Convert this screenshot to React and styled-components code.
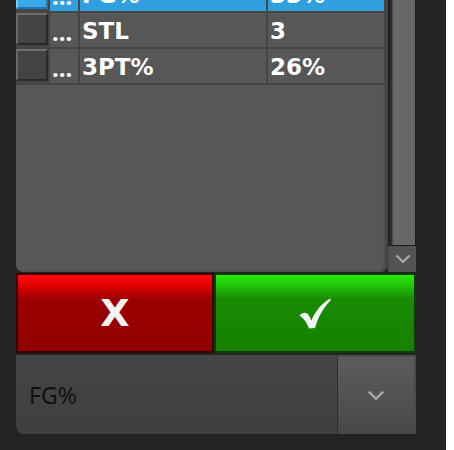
import React, { useEffect, useRef } from "react";
import styled, { createGlobalStyle } from "styled-components";

const GlobalStyle = createGlobalStyle`
  body {
    margin: 0;
    background: #ffffff;
    font-family: "Noto Sans", "Open Sans", sans-serif;
  }
`;

const rows = [
  { name: "FG%", value: "33%", selected: true },
  { name: "STL", value: "3" },
  { name: "3PT%", value: "26%" },
];

const Chevron = ({ size = 16, color = "#a8a8a8" }) => (
  <svg width={size} height={size / 2 + 2} viewBox="0 0 16 10">
    <path d="M1.5 1.5 L8 8 L14.5 1.5" fill="none" stroke={color} strokeWidth="2.2" />
  </svg>
);

const CheckMark = () => (
  <svg width="32" height="31" viewBox="0 0 32 31">
    <path
      d="M0.5 17.5 C4 13.5 8.5 14 10.5 18.5 L12.3 22.5 C16.5 13 22.5 5.5 31 0.5 L32 2 C25 9 19.5 18 16 30 L10 30.5 C8 25 5 20.5 0.5 17.5 Z"
      fill="#f4f4f4"
    />
  </svg>
);

const App = () => {
  const listRef = useRef(null);

  useEffect(() => {
    // list is scrolled a bit, first row cut at the top
    if (listRef.current) listRef.current.scrollTop = 23;
  }, []);

  return (
    <>
      <GlobalStyle />
      <Page>
        <Column>
          <ListPanel>
            <List ref={listRef}>
              {rows.map((r) => (
                <Row key={r.name} $selected={r.selected}>
                  <Check $selected={r.selected} />
                  <Dots $selected={r.selected}>...</Dots>
                  <Cell $selected={r.selected}>{r.name}</Cell>
                  <Cell $selected={r.selected}>{r.value}</Cell>
                </Row>
              ))}
              <Filler />
            </List>
            <Scrollbar>
              <Track />
              <ScrollButton>
                <Chevron size={16} />
              </ScrollButton>
            </Scrollbar>
          </ListPanel>
          <Buttons>
            <ActionButton $kind="cancel">X</ActionButton>
            <ActionButton $kind="ok">
              <CheckMark />
            </ActionButton>
          </Buttons>
          <Dropdown>
            <DropdownLabel>FG%</DropdownLabel>
            <DropdownButton>
              <Chevron size={18} />
            </DropdownButton>
          </Dropdown>
        </Column>
      </Page>
    </>
  );
};

export default App;

const Page = styled.div`
  width: 446px;
  height: 450px;
  background: #232323;
  padding-left: 16px;
  box-sizing: border-box;
`;

const Column = styled.div`
  width: 400px;
  display: flex;
  flex-direction: column;
`;

const ListPanel = styled.div`
  height: 272px;
  display: flex;
`;

const List = styled.div`
  flex: 1;
  background: #575757;
  border-radius: 0 0 7px 7px;
  overflow: hidden;
  box-shadow: inset -3px 0 3px rgba(0, 0, 0, 0.25);
`;

const Filler = styled.div`
  height: 400px;
`;

const Row = styled.div`
  display: grid;
  grid-template-columns: 32px 28px 186px 116px;
  column-gap: 2px;
  height: 34px;
  padding-right: 3px;
  background: #454545;
  border-bottom: 2px solid #454545;
`;

const Check = styled.div`
  height: 32px;
  box-sizing: border-box;
  background: ${(p) => (p.$selected ? "#39a9ea" : "#434343")};
  border-top: 2px solid ${(p) => (p.$selected ? "#7cc8f2" : "#6e6e6e")};
  border-left: 2px solid ${(p) => (p.$selected ? "#7cc8f2" : "#6a6a6a")};
  border-right: 2px solid ${(p) => (p.$selected ? "#1f78b0" : "#2a2a2a")};
  border-bottom: 2px solid ${(p) => (p.$selected ? "#1f78b0" : "#2a2a2a")};
`;

const Cell = styled.div`
  background: ${(p) => (p.$selected ? "#2f9fe0" : "#575757")};
  color: #ffffff;
  font-family: "DejaVu Sans", "Noto Sans", sans-serif;
  font-weight: 700;
  font-size: 23px;
  line-height: 37px;
  padding-left: 2px;
  white-space: nowrap;
  overflow: hidden;
`;

const Dots = styled(Cell)`
  font-family: "Noto Sans", "Open Sans", sans-serif;
  font-size: 24px;
`;

const Scrollbar = styled.div`
  width: 28px;
  display: flex;
  flex-direction: column;
`;

const Track = styled.div`
  flex: 1;
  background: linear-gradient(
    to right,
    #1c1c1c 0,
    #333333 4px,
    #676767 5px,
    #676767 27px,
    #1c1c1c 27px
  );
  border-bottom: 1px solid #1a1a1a;
`;

const ScrollButton = styled.div`
  height: 26px;
  background: #535353;
  border-left: 1px solid #4a4a4a;
  display: flex;
  align-items: center;
  justify-content: center;
`;

const Buttons = styled.div`
  display: flex;
  height: 80px;
  margin-top: 1px;
`;

const ActionButton = styled.div`
  width: ${(p) => (p.$kind === "cancel" ? "198px" : "202px")};
  box-sizing: border-box;
  border: 2px solid ${(p) => (p.$kind === "cancel" ? "#3c0000" : "#0c3a00")};
  background: ${(p) =>
    p.$kind === "cancel"
      ? "linear-gradient(#ff0a0a 0%, #e80000 12%, #9c0000 32%, #910000 100%)"
      : "linear-gradient(#2ae80c 0%, #22cc08 12%, #198a02 32%, #168100 100%)"};
  color: #f4f4f4;
  display: flex;
  align-items: center;
  justify-content: center;
  font-family: "DejaVu Sans", "Noto Sans", sans-serif;
  font-weight: 700;
  font-size: 38px;
`;

const Dropdown = styled.div`
  margin-top: 2px;
  height: 79px;
  display: flex;
  background: linear-gradient(#454545, #3f3f3f);
  border-radius: 0 0 0 8px;
`;

const DropdownLabel = styled.div`
  flex: 1;
  display: flex;
  align-items: center;
  padding-left: 13px;
  color: #111111;
  font-family: "Noto Sans", "Open Sans", sans-serif;
  font-size: 23px;
`;

const DropdownButton = styled.div`
  width: 79px;
  box-sizing: border-box;
  border-left: 1px solid #2e2e2e;
  border-top: 2px solid #4a4a4a;
  border-right: 2px solid #4a4a4a;
  background: linear-gradient(#5c5c5c, #484848);
  display: flex;
  align-items: center;
  justify-content: center;
`;
